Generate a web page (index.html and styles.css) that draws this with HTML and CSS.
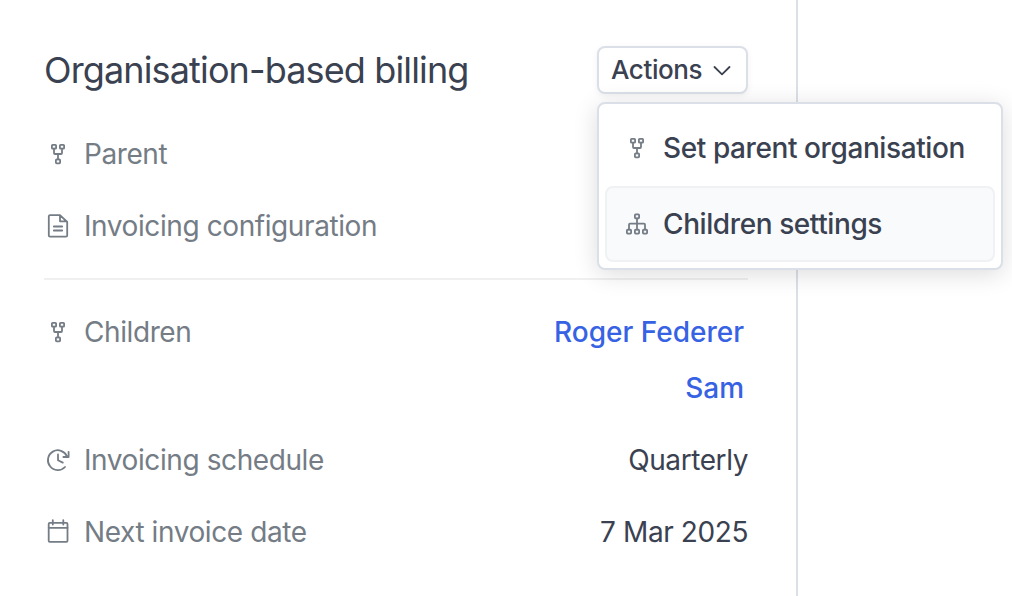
FILE: index.html
```html
<!DOCTYPE html>
<html lang="en">
<head>
    <meta charset="UTF-8">
    <meta name="viewport" content="width=device-width, initial-scale=1.0">
    <title>Organisation-based billing</title>
    <link rel="stylesheet" href="styles.css">
</head>
<body>
    <!-- shared icons -->
    <svg class="sprite">
        <symbol id="fork" viewBox="0 0 28 28">
            <rect x="7.9" y="4.8" width="4.2" height="3.9" rx="0.8"/>
            <rect x="15.9" y="4.8" width="4.2" height="3.9" rx="0.8"/>
            <rect x="11.9" y="19.4" width="4.2" height="3.9" rx="0.8"/>
            <path d="M10 8.7V13q0 1 1 1h6q1 0 1-1V8.7M14 14v5.4"/>
        </symbol>
        <symbol id="tree" viewBox="0 0 28 28">
            <rect x="11.9" y="4.4" width="4.2" height="3.9" rx="0.8"/>
            <rect x="3.9" y="19.7" width="4.2" height="3.9" rx="0.8"/>
            <rect x="11.9" y="19.7" width="4.2" height="3.9" rx="0.8"/>
            <rect x="19.9" y="19.7" width="4.2" height="3.9" rx="0.8"/>
            <path d="M14 8.3v11.4M6 19.7v-5q0-1 1-1h14q1 0 1 1v5"/>
        </symbol>
    </svg>

    <div class="panel">
        <div class="header">
            <h1 class="title">Organisation-based billing</h1>
            <div class="dropdown">
                <button class="btn">
                    Actions
                    <svg class="chevron" viewBox="0 0 20 20"><path d="M2.5 7L10 14.3L17.5 7"/></svg>
                </button>
                <div class="menu">
                    <div class="menu-item">
                        <svg class="icon"><use href="#fork"/></svg>
                        Set parent organisation
                    </div>
                    <div class="menu-item active">
                        <svg class="icon"><use href="#tree"/></svg>
                        Children settings
                    </div>
                </div>
            </div>
        </div>

        <div class="row">
            <svg class="icon"><use href="#fork"/></svg>
            <span class="label">Parent</span>
        </div>
        <div class="row">
            <svg class="icon" viewBox="0 0 28 28">
                <path d="M16 3.2H6q-1.2 0-1.2 1.2v19q0 1.2 1.2 1.2h16q1.2 0 1.2-1.2V10zM16 3.2V9.3h7M9.8 14.5h8.4M9.8 18.5h8.4"/>
            </svg>
            <span class="label">Invoicing configuration</span>
        </div>

        <div class="divider"></div>

        <div class="row children">
            <svg class="icon"><use href="#fork"/></svg>
            <span class="label">Children</span>
            <div class="links">
                <a class="link">Roger Federer</a>
                <a class="link">Sam</a>
            </div>
        </div>
        <div class="row">
            <svg class="icon" viewBox="0 0 28 28">
                <path d="M21 21A9.9 9.9 0 1 1 23 10.4M24.6 5.8V11h-5.2M14 8.4v5.9l4.8 2.3"/>
            </svg>
            <span class="label">Invoicing schedule</span>
            <span class="value">Quarterly</span>
        </div>
        <div class="row">
            <svg class="icon" viewBox="0 0 28 28">
                <rect x="4.7" y="4.9" width="18.8" height="18.9" rx="1"/>
                <path d="M4.7 9.8h18.8M8.8 2.2v4.4M19.3 2.2v4.4"/>
            </svg>
            <span class="label">Next invoice date</span>
            <span class="value">7 Mar 2025</span>
        </div>
    </div>
</body>
</html>
```
FILE: styles.css
```css
* {
    box-sizing: border-box;
}
body {
    margin: 0;
    height: 596px;
    overflow: hidden;
    background: #fff;
    color: #3a4150;
    font-family: Inter, sans-serif;
    font-size: 28px;
    line-height: 40px;
    letter-spacing: -0.41px;
}
.sprite {
    display: none;
}
.panel {
    width: 798px;
    height: 596px;
    padding: 46px 48px 0 44px;
    border-right: 2px solid #dbdfe7;
}
.header {
    display: flex;
    justify-content: space-between;
    align-items: center;
    height: 48px;
    margin-bottom: 40px;
}
.title {
    margin: 0;
    font-size: 36px;
    font-weight: 400;
    letter-spacing: -0.86px;
    white-space: nowrap;
}
.dropdown {
    position: relative;
}
.btn {
    display: flex;
    align-items: center;
    justify-content: space-between;
    width: 151px;
    height: 48px;
    padding: 0 14px 1px 12px;
    border: 2px solid #dbdfe7;
    border-radius: 8px;
    background: #fff;
    box-shadow: 0 2px 6px rgba(0, 0, 0, 0.06);
    color: #3a4150;
    font-family: inherit;
    font-size: 26px;
    font-weight: 500;
    letter-spacing: -0.4px;
}
.chevron {
    width: 20px;
    height: 20px;
    fill: none;
    stroke: #3a4150;
    stroke-width: 1.8;
    stroke-linecap: round;
    stroke-linejoin: round;
}
.menu {
    position: absolute;
    top: 56px;
    left: 0;
    width: 406px;
    padding: 6px;
    border: 2px solid #dbdfe7;
    border-radius: 8px;
    background: #fff;
    box-shadow: 0 4px 24px rgba(0, 0, 0, 0.14);
}
.menu-item {
    display: flex;
    align-items: center;
    gap: 12px;
    height: 76px;
    padding: 0 16px;
    border: 2px solid transparent;
    border-radius: 8px;
    font-weight: 500;
    white-space: nowrap;
}
.menu-item.active {
    border-color: #eff1f3;
    background: #f9fafc;
}
.icon {
    flex: none;
    width: 28px;
    height: 28px;
    fill: none;
    stroke: #747c85;
    stroke-width: 1.8;
    stroke-linecap: round;
    stroke-linejoin: round;
}
.row {
    display: flex;
    align-items: center;
    gap: 12px;
    height: 40px;
    margin-bottom: 32px;
}
.label {
    color: #747c85;
}
.value {
    margin-left: auto;
}
.divider {
    height: 2px;
    margin-bottom: 32px;
    background: #f0f0f1;
}
.children {
    align-items: flex-start;
    height: 96px;
}
.children .icon {
    margin-top: 6px;
}
.links {
    display: flex;
    flex-direction: column;
    align-items: flex-end;
    gap: 16px;
    margin-left: auto;
    padding-right: 4px;
    letter-spacing: 0;
}
.link {
    color: #3662e3;
    font-weight: 500;
}
```
